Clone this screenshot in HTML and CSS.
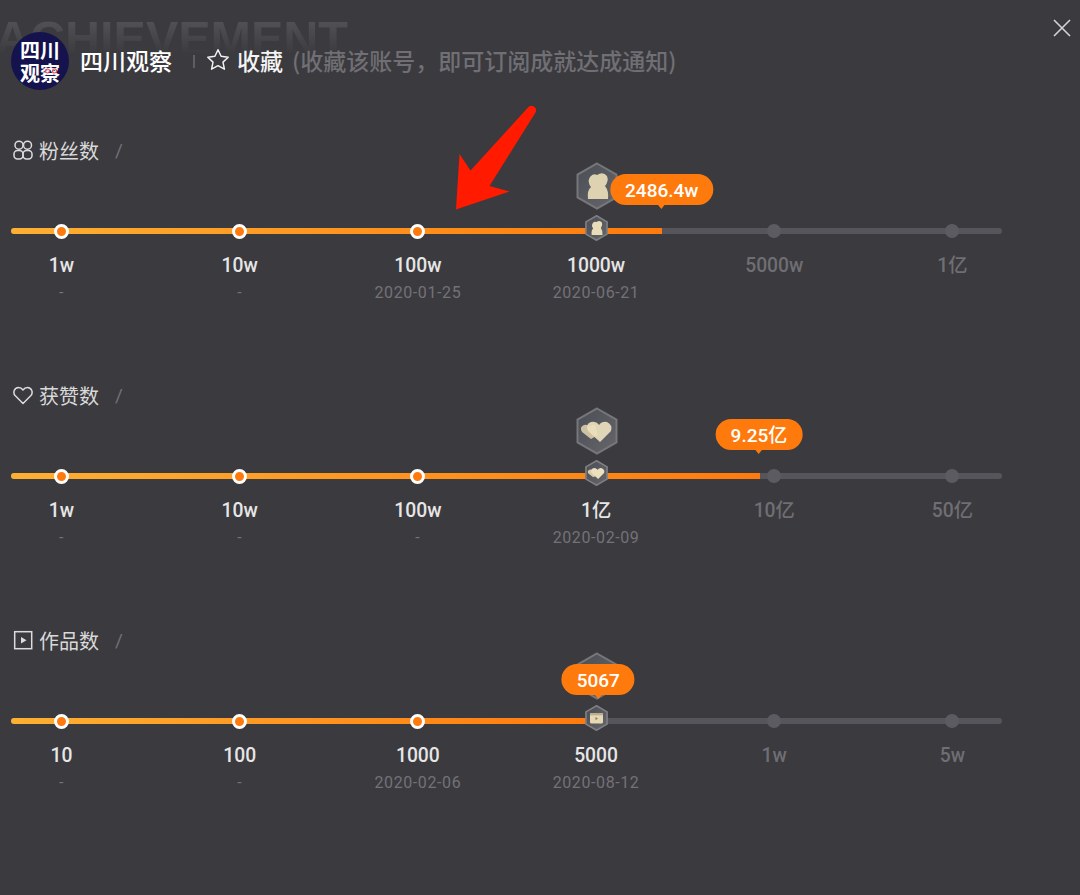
FILE: index.html
```html
<!DOCTYPE html>
<html lang="zh">
<head>
<meta charset="utf-8">
<title>成就</title>
<link rel="stylesheet" href="styles.css">
</head>
<body>
<main class="page">
  <div class="watermark">ACHIEVEMENT</div>
  <button class="close" aria-label="关闭"><svg viewBox="0 0 18 18" width="18" height="18"><path d="M1 1L17 17M17 1L1 17" stroke="#d4d4d4" stroke-width="1.6" fill="none"/></svg></button>
  <svg class="annotation" viewBox="0 0 90 110" width="90" height="110"><path d="M6 105.500L9.500 50L20.500 66.500L77.500 4Q80 0.500 84 2.500Q87.500 5 85.500 8.500L39.500 82L59.500 87.500Z" fill="#ff1a00"/></svg>

  <header class="header">
    <div class="avatar"><span>四川</span><span>观察</span>
      <svg class="avatar-eyes" viewBox="0 0 16 6" width="16" height="6"><g fill="none" stroke="#e2505f" stroke-width="1.200"><circle cx="4.500" cy="3" r="2"/><circle cx="11.500" cy="3" r="2"/></g></svg>
    </div>
    <div class="account">四川观察</div>
    <i class="divider"></i>
    <svg class="star" viewBox="0 0 24 24" width="24" height="24"><path d="M12 1.800L15.100 8.300L22.200 9.200L17 14.100L18.400 21.200L12 17.700L5.600 21.200L7 14.100L1.800 9.200L8.900 8.300Z" fill="none" stroke="#f2f2f2" stroke-width="1.500" stroke-linejoin="round"/></svg>
    <div class="fav">收藏</div>
    <div class="hint">(收藏该账号，即可订阅成就达成通知)</div>
  </header>

  <section class="metric">
    <h2 class="metric-title">
      <svg class="metric-icon" viewBox="0 0 20 20" width="20" height="20"><defs><linearGradient id="hexFill" x1="0" y1="0" x2="1" y2="1"><stop offset="0" stop-color="#4a4d56"/><stop offset="1" stop-color="#66676a"/></linearGradient></defs><g fill="none" stroke="#dcdcdc" stroke-width="1.500"><circle cx="6" cy="5.200" r="4"/><circle cx="14.500" cy="5.200" r="4"/><rect x="1" y="10.500" width="9" height="8.500" rx="3.500"/><rect x="10" y="10.500" width="9" height="8.500" rx="3.500"/></g></svg>
      <span>粉丝数</span><em class="slash">/</em>
    </h2>
    <div class="rail">
      <div class="track"><div class="fill" style="width:65.7%"></div></div>
      <ol class="stops">
        <li class="stop"><div class="slot"><i class="dot"></i></div><div class="value">1w</div><div class="date">-</div></li>
        <li class="stop"><div class="slot"><i class="dot"></i></div><div class="value">10w</div><div class="date">-</div></li>
        <li class="stop"><div class="slot"><i class="dot"></i></div><div class="value">100w</div><div class="date">2020-01-25</div></li>
        <li class="stop">
          <div class="slot">
            <svg class="hex-big" viewBox="0 0 42 48" width="42" height="48"><polygon points="21,1.500 40.500,12.700 40.500,35.300 21,46.500 1.500,35.300 1.500,12.700" fill="url(#hexFill)" stroke="#77777a" stroke-width="2"/><path class="art" d="M12 37Q11 28 15 25Q11 20 14 15Q17 11 21 13Q27 9 31 14Q33 19 29 24Q33 29 32 37Z" fill="#e9dcb8"/></svg>
            <svg class="hex-small" viewBox="0 0 42 48" width="23" height="26"><polygon points="21,1.500 40.500,12.700 40.500,35.300 21,46.500 1.500,35.300 1.500,12.700" fill="url(#hexFill)" stroke="#808083" stroke-width="3"/><path d="M12 37Q11 28 15 25Q11 20 14 15Q17 11 21 13Q27 9 31 14Q33 19 29 24Q33 29 32 37Z" fill="#e9dcb8"/></svg>
          </div>
          <div class="value">1000w</div><div class="date">2020-06-21</div>
        </li>
        <li class="stop is-pending"><div class="slot"><i class="dot"></i></div><div class="value">5000w</div></li>
        <li class="stop is-pending"><div class="slot"><i class="dot"></i></div><div class="value">1亿</div></li>
      </ol>
      <div class="bubble" style="left:65.6%">2486.4w</div>
    </div>
  </section>

  <section class="metric">
    <h2 class="metric-title">
      <svg class="metric-icon" viewBox="0 0 20 20" width="20" height="20"><path d="M10 18.500L2.300 10.800C-.5 7.800 1.200 2.500 5.500 2.500C7.500 2.500 9 3.500 10 5C11 3.500 12.500 2.500 14.500 2.500C18.800 2.500 20.500 7.800 17.700 10.800Z" fill="none" stroke="#dcdcdc" stroke-width="1.500" stroke-linejoin="round"/></svg>
      <span>获赞数</span><em class="slash">/</em>
    </h2>
    <div class="rail">
      <div class="track"><div class="fill" style="width:75.6%"></div></div>
      <ol class="stops">
        <li class="stop"><div class="slot"><i class="dot"></i></div><div class="value">1w</div><div class="date">-</div></li>
        <li class="stop"><div class="slot"><i class="dot"></i></div><div class="value">10w</div><div class="date">-</div></li>
        <li class="stop"><div class="slot"><i class="dot"></i></div><div class="value">100w</div><div class="date">-</div></li>
        <li class="stop">
          <div class="slot">
            <svg class="hex-big" viewBox="0 0 42 48" width="42" height="48"><polygon points="21,1.500 40.500,12.700 40.500,35.300 21,46.500 1.500,35.300 1.500,12.700" fill="url(#hexFill)" stroke="#77777a" stroke-width="2"/><path class="art" d="M15 32L6 25Q3 20 8 18Q12 17 14 20Q16 17 19 18L22 28Z" fill="#d8cba8"/><path class="art" d="M24 35L12 24Q9 17 15 15Q20 14 23 18Q26 14 31 15Q37 18 35 24Z" fill="#ecdfbd"/></svg>
            <svg class="hex-small" viewBox="0 0 42 48" width="23" height="26"><polygon points="21,1.500 40.500,12.700 40.500,35.300 21,46.500 1.500,35.300 1.500,12.700" fill="url(#hexFill)" stroke="#808083" stroke-width="3"/><path d="M15 32L6 25Q3 20 8 18Q12 17 14 20Q16 17 19 18L22 28Z" fill="#d8cba8"/><path d="M24 35L12 24Q9 17 15 15Q20 14 23 18Q26 14 31 15Q37 18 35 24Z" fill="#ecdfbd"/></svg>
          </div>
          <div class="value">1亿</div><div class="date">2020-02-09</div>
        </li>
        <li class="stop is-pending"><div class="slot"><i class="dot"></i></div><div class="value">10亿</div></li>
        <li class="stop is-pending"><div class="slot"><i class="dot"></i></div><div class="value">50亿</div></li>
      </ol>
      <div class="bubble" style="left:75.4%">9.25亿</div>
    </div>
  </section>

  <section class="metric">
    <h2 class="metric-title">
      <svg class="metric-icon" viewBox="0 0 20 20" width="20" height="20"><rect x="1.700" y="1.700" width="17" height="17" fill="none" stroke="#dcdcdc" stroke-width="1.500"/><path d="M8 7L13.500 10.200L8 13.400Z" fill="#dcdcdc"/></svg>
      <span>作品数</span><em class="slash">/</em>
    </h2>
    <div class="rail">
      <div class="track"><div class="fill" style="width:59%"></div></div>
      <ol class="stops">
        <li class="stop"><div class="slot"><i class="dot"></i></div><div class="value">10</div><div class="date">-</div></li>
        <li class="stop"><div class="slot"><i class="dot"></i></div><div class="value">100</div><div class="date">-</div></li>
        <li class="stop"><div class="slot"><i class="dot"></i></div><div class="value">1000</div><div class="date">2020-02-06</div></li>
        <li class="stop">
          <div class="slot">
            <svg class="hex-big" viewBox="0 0 42 48" width="42" height="48"><polygon points="21,1.500 40.500,12.700 40.500,35.300 21,46.500 1.500,35.300 1.500,12.700" fill="url(#hexFill)" stroke="#77777a" stroke-width="2"/></svg>
            <svg class="hex-small" viewBox="0 0 42 48" width="23" height="26"><polygon points="21,1.500 40.500,12.700 40.500,35.300 21,46.500 1.500,35.300 1.500,12.700" fill="url(#hexFill)" stroke="#808083" stroke-width="3"/><rect x="9" y="15" width="24" height="19" rx="2" fill="#e6d9b4"/><rect x="9" y="15" width="24" height="4" fill="#b9ae8e"/><path d="M19 22L24 25L19 28Z" fill="#8d8468"/></svg>
          </div>
          <div class="value">5000</div><div class="date">2020-08-12</div>
        </li>
        <li class="stop is-pending"><div class="slot"><i class="dot"></i></div><div class="value">1w</div></li>
        <li class="stop is-pending"><div class="slot"><i class="dot"></i></div><div class="value">5w</div></li>
      </ol>
      <div class="bubble" style="left:59.2%">5067</div>
    </div>
  </section>
</main>
</body>
</html>
```
FILE: styles.css
```css
* { box-sizing: border-box; }
html, body { margin: 0; padding: 0; }
body {
  background: #3b3a3f;
  color: #e6e6e6;
  font-family: Roboto, "Noto Sans CJK SC", sans-serif;
}
.page {
  position: relative;
  width: 1080px;
  height: 895px;
  overflow: hidden;
  padding: 32px 0 0 11px;
}
.watermark {
  position: absolute;
  left: -5px;
  top: 11px;
  font-family: "Liberation Sans", sans-serif;
  font-weight: 700;
  font-size: 48.500px;
  line-height: 54px;
  color: transparent;
  background: linear-gradient(180deg, #515055 20%, #3b3a3f 80%);
  -webkit-background-clip: text;
  background-clip: text;
}
.close {
  position: absolute;
  left: 1053px;
  top: 19px;
  width: 18px;
  height: 18px;
  padding: 0;
  border: 0;
  background: none;
  line-height: 0;
}
.annotation {
  position: absolute;
  left: 450px;
  top: 104px;
  z-index: 3;
}
.header {
  position: relative;
  display: flex;
  align-items: center;
  height: 58px;
  margin-bottom: 47px;
  font-family: "Noto Sans CJK SC", sans-serif;
}
.avatar {
  position: relative;
  display: flex;
  flex-direction: column;
  align-items: center;
  justify-content: center;
  width: 58px;
  height: 58px;
  border-radius: 50%;
  background: #15134d;
  color: #fff;
  font-size: 20px;
  font-weight: 700;
  line-height: 23px;
}
.avatar-eyes {
  position: absolute;
  left: 32px;
  top: 36px;
}
.account {
  margin: 0 0 2px 11px;
  font-size: 23px;
  font-weight: 500;
  color: #fff;
}
.divider {
  width: 2px;
  height: 13px;
  margin: 0 11px 0 21px;
  background: #5f5e63;
}
.star { display: block; margin-bottom: 2px; }
.fav {
  margin: 0 0 2px 7px;
  font-size: 23px;
  font-weight: 500;
  color: #f4f4f4;
}
.hint {
  margin: 0 0 2px 9px;
  font-size: 23px;
  font-weight: 500;
  color: #706f74;
}
.metric { height: 245px; position: relative; }
.metric-title {
  display: flex;
  align-items: center;
  height: 26px;
  margin: 0 0 54px;
  padding-left: 2px;
  font-family: "Noto Sans CJK SC", sans-serif;
  font-size: 20px;
  font-weight: 400;
  color: #d9d9d9;
}
.metric-icon { display: block; }
.metric-title span { margin-left: 6px; }
.slash {
  margin-left: 16px;
  font-family: Roboto, sans-serif;
  font-size: 19px;
  font-style: normal;
  color: #727176;
}
.rail { position: relative; width: 992px; }
.track {
  position: absolute;
  left: 0;
  right: 1px;
  top: 11px;
  height: 6px;
  border-radius: 3px;
  background: #56555b;
}
.fill {
  height: 100%;
  border-radius: 3px 0 0 3px;
  background: linear-gradient(90deg, #fdb033 0%, #ff7a0c 100%);
}
.stops {
  position: relative;
  display: flex;
  justify-content: space-between;
  margin: 0;
  padding: 0;
  list-style: none;
}
.stop {
  width: 101px;
  text-align: center;
}
.slot {
  position: relative;
  display: flex;
  align-items: center;
  justify-content: center;
  height: 28px;
}
.dot {
  display: block;
  width: 15px;
  height: 15px;
  border: 3px solid #fff;
  border-radius: 50%;
  background: #ff7a0c;
}
.is-pending .dot {
  width: 14px;
  height: 14px;
  border: 0;
  background: #5c5b61;
}
.hex-big {
  position: absolute;
  left: 30px;
  top: -55px;
}
.art { opacity: .92; }
.hex-small {
  display: block;
  margin-bottom: 6px;
}
.value {
  height: 24px;
  margin-top: 9px;
  font-size: 19.300px;
  font-weight: 500;
  line-height: 24px;
  color: #e6e6e6;
}
.is-pending .value { color: #6f6e73; }
.date {
  height: 20px;
  margin-top: 5px;
  font-size: 16px;
  line-height: 20px;
  letter-spacing: .6px;
  color: #737277;
}
.bubble {
  position: absolute;
  top: -43px;
  height: 31px;
  padding: 0 15px;
  transform: translateX(-50%);
  border-radius: 16px;
  background: #ff7a0c;
  color: #fff;
  font-size: 19px;
  font-weight: 500;
  line-height: 34px;
  white-space: nowrap;
}
.bubble::after {
  content: "";
  position: absolute;
  left: 50%;
  top: 30px;
  margin-left: -4px;
  border: 4px solid transparent;
  border-top: 5px solid #ff7a0c;
  border-bottom: 0;
}
```
